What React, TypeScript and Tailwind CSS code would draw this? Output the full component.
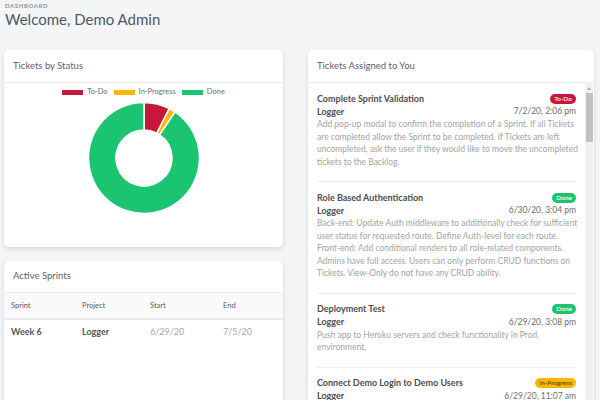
import React from "react";

type Ticket = {
  title: string;
  project: string;
  date: string;
  status: "To-Do" | "In-Progress" | "Done";
  lines: string[];
};

const tickets: Ticket[] = [
  {
    title: "Complete Sprint Validation",
    project: "Logger",
    date: "7/2/20, 2:06 pm",
    status: "To-Do",
    lines: [
      "Add pop-up modal to confirm the completion of a Sprint. If all Tickets",
      "are completed allow the Sprint to be completed. If Tickets are left",
      "uncompleted, ask the user if they would like to move the uncompleted",
      "tickets to the Backlog.",
    ],
  },
  {
    title: "Role Based Authentication",
    project: "Logger",
    date: "6/30/20, 3:04 pm",
    status: "Done",
    lines: [
      "Back-end: Update Auth middleware to additionally check for sufficient",
      "user status for requested route. Define Auth-level for each route.",
      "Front-end: Add conditional renders to all role-related components.",
      "Admins have full access. Users can only perform CRUD functions on",
      "Tickets. View-Only do not have any CRUD ability.",
    ],
  },
  {
    title: "Deployment Test",
    project: "Logger",
    date: "6/29/20, 3:08 pm",
    status: "Done",
    lines: [
      "Push app to Heroku servers and check functionality in Prod.",
      "environment.",
    ],
  },
  {
    title: "Connect Demo Login to Demo Users",
    project: "Logger",
    date: "6/29/20, 11:07 am",
    status: "In-Progress",
    lines: [],
  },
];

const badgeStyles: Record<Ticket["status"], string> = {
  "To-Do": "bg-[#c8173b] text-white",
  Done: "bg-[#1bc470] text-white",
  "In-Progress": "bg-[#fbb603] text-[#5a4a10]",
};

// donut slice between two angles (degrees, 0 = top, clockwise)
function slice(a0: number, a1: number, R: number, r: number, c: number) {
  const pt = (a: number, rad: number) => {
    const t = ((a - 90) * Math.PI) / 180;
    return `${c + rad * Math.cos(t)} ${c + rad * Math.sin(t)}`;
  };
  const large = a1 - a0 > 180 ? 1 : 0;
  return `M ${pt(a0, R)} A ${R} ${R} 0 ${large} 1 ${pt(a1, R)} L ${pt(a1, r)} A ${r} ${r} 0 ${large} 0 ${pt(a0, r)} Z`;
}

function Donut() {
  const data = [
    { value: 4, color: "#c8173b" },
    { value: 1, color: "#fbb603" },
    { value: 48, color: "#1bc470" },
  ];
  const total = data.reduce((s, d) => s + d.value, 0);
  let start = 0;
  return (
    <svg width="114" height="114" viewBox="0 0 114 114">
      {data.map((d, i) => {
        const end = start + (d.value / total) * 360;
        const p = slice(start, end, 55.5, 28, 57);
        start = end;
        return <path key={i} d={p} fill={d.color} stroke="#fff" strokeWidth="1.5" />;
      })}
    </svg>
  );
}

function LegendItem({ color, label }: { color: string; label: string }) {
  return (
    <div className="flex items-center gap-[4px]">
      <span className="w-[21px] h-[5px]" style={{ backgroundColor: color }} />
      <span className="text-[7.5px] leading-[8px] text-[#707070]">{label}</span>
    </div>
  );
}

function CardHeader({ title }: { title: string }) {
  return (
    <div className="h-[33px] flex items-center px-[9px] border-b border-[#ededed]">
      <span className="text-[9.5px] text-[#5b6170]">{title}</span>
    </div>
  );
}

function TicketItem({ t }: { t: Ticket }) {
  return (
    <div className="pt-[9px] pb-[13px] border-b border-[#ececec] whitespace-nowrap">
      <div className="flex items-center justify-between h-[13px]">
        <span className="text-[9px] font-bold text-[#4d4d4d]">{t.title}</span>
        <span
          className={`h-[10px] px-[4px] rounded-full text-[6.5px] leading-[10px] font-semibold ${badgeStyles[t.status]}`}
        >
          {t.status}
        </span>
      </div>
      <div className="flex items-center justify-between h-[13px]">
        <span className="text-[9px] font-bold text-[#4d4d4d]">{t.project}</span>
        <span className="text-[8.5px] text-[#6e6e6e]">{t.date}</span>
      </div>
      <div className="text-[8.5px] leading-[12.5px] text-[#a3a3a3]">
        {t.lines.map((l, i) => (
          <div key={i}>{l}</div>
        ))}
      </div>
    </div>
  );
}

export default function App() {
  return (
    <main className="h-[400px] w-full overflow-hidden bg-[#f4f5f7] font-['Lato','Noto_Sans',sans-serif]">
      {/* Heading */}
      <div className="pl-[5px] pt-[2px]">
        <div className="text-[6px] leading-[7px] tracking-[0.1em] font-bold text-[#8b93a1]">
          DASHBOARD
        </div>
        <h1 className="text-[15px] leading-[20px] text-[#4f5868]">Welcome, Demo Admin</h1>
      </div>

      <div className="flex gap-[25px] pl-[4px] mt-[21px]">
        {/* Left column */}
        <div className="w-[279px] flex flex-col gap-[14px]">
          <div className="h-[197px] bg-white rounded-[5px] shadow-[0_2px_5px_rgba(0,0,0,0.13)]">
            <CardHeader title="Tickets by Status" />
            <div className="flex flex-col items-center pt-[5px]">
              <div className="flex items-center gap-[6px]">
                <LegendItem color="#c8173b" label="To-Do" />
                <LegendItem color="#fbb603" label="In-Progress" />
                <LegendItem color="#1bc470" label="Done" />
              </div>
              <div className="mt-[5px]">
                <Donut />
              </div>
            </div>
          </div>

          <div className="h-[160px] bg-white rounded-[5px] shadow-[0_2px_5px_rgba(0,0,0,0.13)]">
            <div className="h-[32px] flex items-center px-[9px] border-b border-[#ededed]">
              <span className="text-[9.5px] text-[#5b6170]">Active Sprints</span>
            </div>
            <div className="grid grid-cols-[71px_68px_73px_1fr] pl-[7px] h-[27px] items-center bg-[#fafafa] border-b-2 border-[#e9e9e9] text-[7.5px] text-[#5a5a5a]">
              <span>Sprint</span>
              <span>Project</span>
              <span>Start</span>
              <span>End</span>
            </div>
            <div className="grid grid-cols-[71px_68px_73px_1fr] pl-[7px] h-[24px] items-center text-[9px]">
              <span className="font-bold text-[#555]">Week 6</span>
              <span className="font-bold text-[#555]">Logger</span>
              <span className="text-[#a8a8a8]">6/29/20</span>
              <span className="text-[#a8a8a8]">7/5/20</span>
            </div>
          </div>
        </div>

        {/* Right column */}
        <div className="w-[286px] h-[400px] bg-white rounded-[5px] shadow-[0_2px_5px_rgba(0,0,0,0.13)] flex flex-col">
          <CardHeader title="Tickets Assigned to You" />
          <div className="flex flex-1">
            <div className="w-[277px] px-[9px]">
              {tickets.map((t) => (
                <TicketItem key={t.title} t={t} />
              ))}
            </div>
            <div className="w-[8px] bg-[#f1f1f1] flex flex-col items-center">
              <svg width="8" height="9" viewBox="0 0 8 9" className="mt-[1px]">
                <path d="M2 6 L4 3.5 L6 6 Z" fill="#a3a3a3" />
              </svg>
              <div className="w-[7px] h-[49px] bg-[#c1c1c1]" />
            </div>
          </div>
        </div>
      </div>
    </main>
  );
}
